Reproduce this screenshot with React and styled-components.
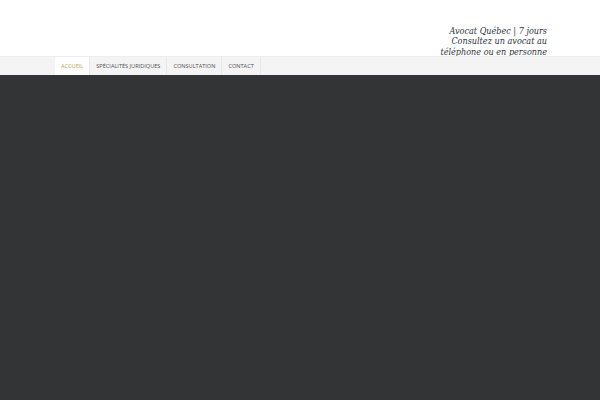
import React from "react";
import styled, { createGlobalStyle } from "styled-components";

const Global = createGlobalStyle`
  html, body { margin: 0; padding: 0; background: #333436; }
  #root { min-height: 400px; }
`;

const Page = styled.div`
  width: 600px;
  height: 400px;
  display: flex;
  flex-direction: column;
  background: #333436;
`;

const Header = styled.header`
  height: 56px;
  background: #ffffff;
  display: flex;
  justify-content: flex-end;
  align-items: flex-end;
  padding: 0 53px 0 0;
  box-sizing: border-box;
`;

const Tagline = styled.div`
  font-family: "DejaVu Serif Condensed", "DejaVu Serif", serif;
  font-stretch: condensed;
  font-style: italic;
  font-size: 9px;
  line-height: 10.4px;
  color: #2c3440;
  text-align: right;
  margin-bottom: -1px;
`;

const NavBar = styled.nav`
  height: 18px;
  background: #f4f4f4;
  border-top: 1px solid #ededed;
  display: flex;
  padding-left: 55px;
`;

const NavItem = styled.a`
  display: flex;
  align-items: center;
  padding: 0 6px;
  font-family: "Open Sans", sans-serif;
  font-size: 5.6px;
  text-transform: uppercase;
  color: ${(p) => (p.$active ? "#b8a94c" : "#505050")};
  background: ${(p) => (p.$active ? "#ffffff" : "transparent")};
  border-right: 1px solid #e8e8e8;
  text-decoration: none;
`;

const Main = styled.main`
  flex: 1;
  background: #333436;
`;

export default function App() {
  return (
    <>
      <Global />
      <Page>
        <Header>
          <Tagline>
            Avocat Québec | 7 jours
            <br />
            Consultez un avocat au
            <br />
            téléphone ou en personne
          </Tagline>
        </Header>
        <NavBar>
          <NavItem $active>Accueil</NavItem>
          <NavItem>Spécialités juridiques</NavItem>
          <NavItem>Consultation</NavItem>
          <NavItem>Contact</NavItem>
        </NavBar>
        <Main />
      </Page>
    </>
  );
}
